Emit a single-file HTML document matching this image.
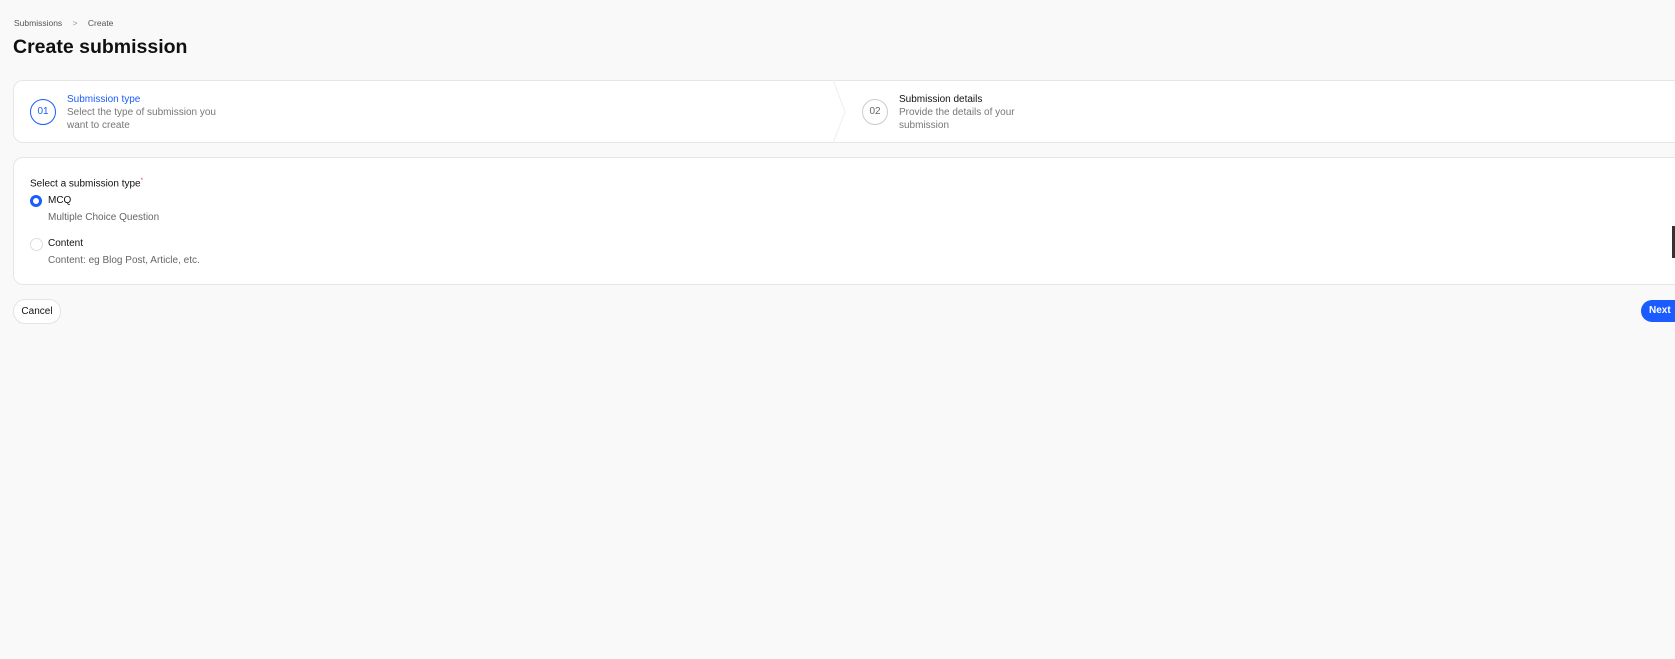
<!DOCTYPE html><html><head><style>
body{margin:0;width:1675px;height:659px;background:#f9f9f9;font-family:"Liberation Sans",sans-serif;position:relative;overflow:hidden}
.a{position:absolute}
.card{position:absolute;left:13px;right:-10px;background:#fff;border:1px solid #e6e6e6;border-radius:10px}
.t{font-size:10px;line-height:13px;white-space:nowrap}
.circ{position:absolute;width:24px;height:24px;border-radius:50%;font-size:10px;text-align:center;line-height:24px}
</style></head><body>
<div class="a t" style="left:14px;top:17px;font-size:8.5px;color:#555">Submissions <span style="margin:0 8px;color:#999">&gt;</span> Create</div>
<div class="a" style="left:13px;top:36px;font-size:19.5px;font-weight:bold;color:#111">Create submission</div>
<div class="card" style="top:80px;height:61px">
<svg class="a" style="left:818px;top:-1px" width="16" height="63"><polyline points="1,0 13,32 1,63" fill="none" stroke="#eeeeee"/></svg>
<div class="circ" style="left:16px;top:18px;border:1.5px solid #1a5cff;color:#1a5cff">01</div>
<div class="a t" style="left:53px;top:12px;color:#1a5cff">Submission type</div>
<div class="a t" style="left:53px;top:25px;color:#777">Select the type of submission you<br>want to create</div>
<div class="circ" style="left:848px;top:18px;border:1px solid #ccc;color:#666">02</div>
<div class="a t" style="left:885px;top:12px;color:#111">Submission details</div>
<div class="a t" style="left:885px;top:25px;color:#777">Provide the details of your<br>submission</div>
</div>
<div class="card" style="top:157px;height:126px">
<div class="a t" style="left:16px;top:17px;font-size:10px;color:#111">Select a submission type<sup style="color:#e33;font-size:6px">*</sup></div>
<div class="a" style="left:16px;top:37px;width:6px;height:6px;border:3.5px solid #1a5cff;border-radius:50%;background:#fff"></div>
<div class="a t" style="left:34px;top:36px;font-size:10px;color:#111">MCQ</div>
<div class="a t" style="left:34px;top:53px;font-size:10px;color:#666">Multiple Choice Question</div>
<div class="a" style="left:16px;top:80px;width:11px;height:11px;border:1px solid #ddd;border-radius:50%"></div>
<div class="a t" style="left:34px;top:79px;font-size:10px;color:#111">Content</div>
<div class="a t" style="left:34px;top:96px;font-size:10px;color:#666">Content: eg Blog Post, Article, etc.</div>
</div>
<div class="a" style="left:13px;top:299px;width:46px;height:23px;border:1px solid #e3e3e3;border-radius:12px;background:#fff;font-size:10px;text-align:center;line-height:23px;color:#111">Cancel</div>
<div class="a" style="left:1641px;top:300px;width:50px;height:22px;border-radius:11px;background:#1a5cff;color:#fff;font-size:10px;font-weight:bold;line-height:22px;padding-left:8px;box-sizing:border-box">Next</div>
<div class="a" style="left:1672px;top:226px;width:3px;height:32px;background:#333"></div>
</body></html>
